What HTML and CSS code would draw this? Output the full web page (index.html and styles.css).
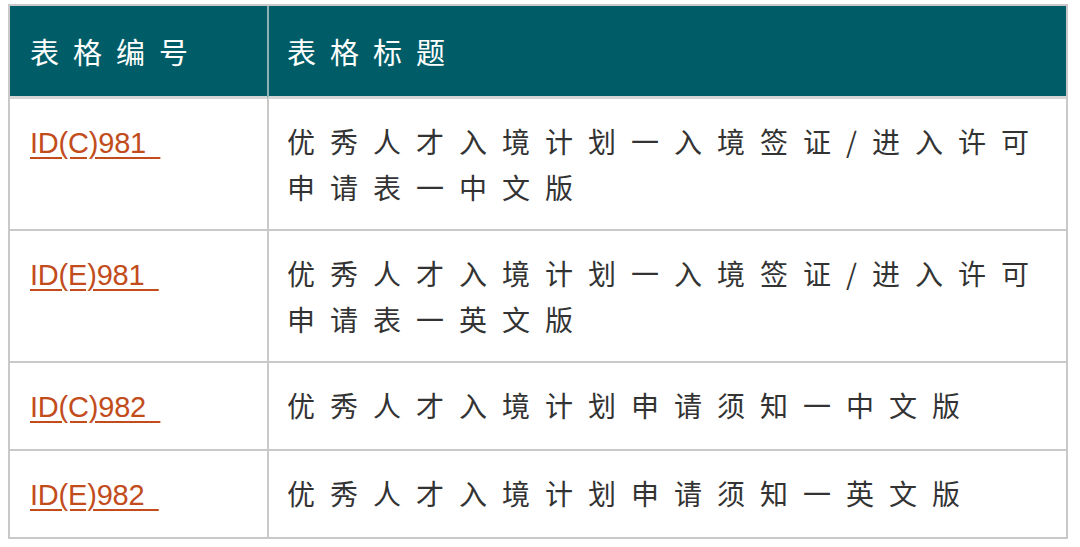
FILE: index.html
```html
<!DOCTYPE html>
<html lang="zh-CN">
<head>
<meta charset="utf-8">
<title>表格</title>
<link rel="stylesheet" href="styles.css">
</head>
<body>
<div class="table">
  <div class="cell head c1">表格编号</div>
  <div class="cell head c2">表格标题</div>

  <div class="cell c1"><a class="link" href="#">ID(C)981&ensp;</a></div>
  <div class="cell c2">优秀人才入境计划一入境签证/进入许可申请表一中文版</div>

  <div class="cell c1"><a class="link" href="#">ID(E)981&ensp;</a></div>
  <div class="cell c2">优秀人才入境计划一入境签证/进入许可申请表一英文版</div>

  <div class="cell c1"><a class="link" href="#">ID(C)982&ensp;</a></div>
  <div class="cell c2">优秀人才入境计划申请须知一中文版</div>

  <div class="cell c1 last"><a class="link" href="#">ID(E)982&ensp;</a></div>
  <div class="cell c2 last">优秀人才入境计划申请须知一英文版</div>
</div>
</body>
</html>
```
FILE: styles.css
```css
html, body {
  margin: 0;
  padding: 0;
  background: #ffffff;
}

body {
  font-family: "Noto Sans CJK SC", "Noto Sans", sans-serif;
  color: #333333;
}

.table {
  margin: 4px 0 0 8px;
  width: 1060px;
  box-sizing: border-box;
  border: 2px solid #c9c9c9;
  display: grid;
  grid-template-columns: 257px 1fr;
}

.cell {
  font-size: 28px;
  line-height: 46px;
  letter-spacing: 15px;
  padding: 19px 10px 19px 19px;
  border-bottom: 2px solid #c9c9c9;
}

.cell.last {
  border-bottom: none;
}

.c1 {
  padding-left: 20px;
}

.c2 {
  border-left: 2px solid #c9c9c9;
  padding-left: 18px;
}

.head {
  background: #005d68;
  color: #ffffff;
  font-size: 29px;
  letter-spacing: 14px;
  padding-top: 22px;
  padding-bottom: 22px;
  border-bottom: 3px solid #d4d6d5;
}

.head.c2 {
  border-left-color: #8fb0b4;
}

.link {
  font-family: "Liberation Sans", Arial, sans-serif;
  font-size: 29px;
  letter-spacing: -0.2px;
  color: #c24c1c;
  text-decoration: underline;
  text-decoration-thickness: 2px;
  text-underline-offset: 4px;
}
```
